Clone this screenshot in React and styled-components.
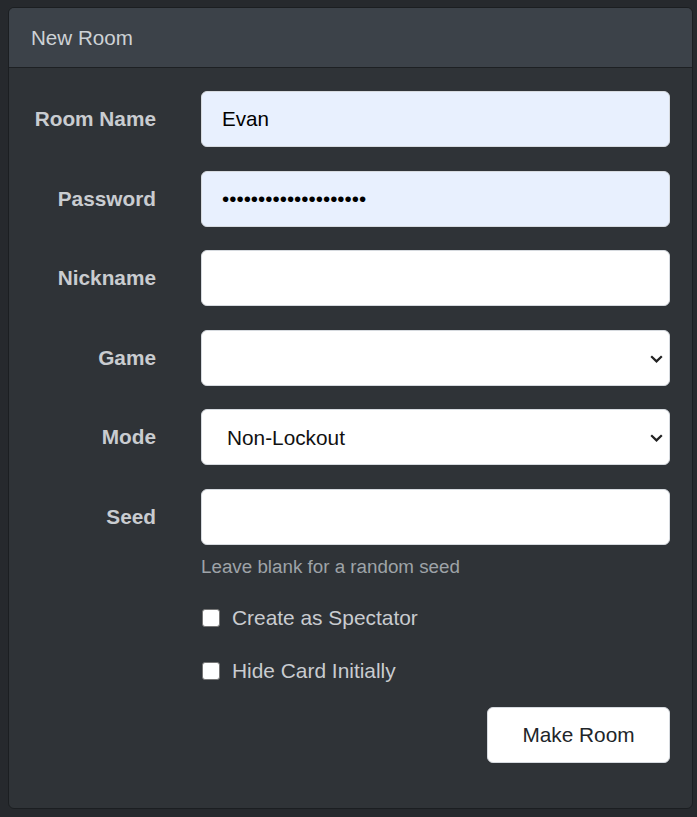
import React from "react";
import styled, { createGlobalStyle } from "styled-components";

const GlobalStyle = createGlobalStyle`
  body {
    margin: 0;
    background: #26292d;
    font-family: "Liberation Sans", Arial, sans-serif;
  }
`;

const Card = styled.div`
  margin: 7px 0 8px 8px;
  width: 685px;
  box-sizing: border-box;
  background: #2f3337;
  border: 1px solid #1b1e21;
  border-radius: 6px;
  overflow: hidden;
`;

const Header = styled.div`
  height: 59px;
  display: flex;
  align-items: center;
  padding: 0 22px;
  background: #3c4249;
  border-bottom: 1px solid #1d2023;
  color: #ced2d6;
  font-size: 20.6px;
`;

const Body = styled.div`
  padding: 23px 22px 45px 25px;
`;

const Fields = styled.div`
  display: flex;
  flex-direction: column;
  gap: 23.5px;
`;

const Row = styled.div`
  display: flex;
  align-items: flex-start;
`;

const Label = styled.label`
  width: 122px;
  margin-right: 45px;
  flex-shrink: 0;
  height: 56px;
  line-height: 56px;
  text-align: right;
  font-weight: bold;
  font-size: 20.8px;
  color: #c9ccd0;
  white-space: nowrap;
`;

const Control = styled.div`
  flex: 1;
  display: flex;
  flex-direction: column;
  position: relative;
`;

const Input = styled.input`
  height: 56px;
  box-sizing: border-box;
  width: 100%;
  padding: 0 20px;
  border: 1px solid #d6dadf;
  border-radius: 6px;
  background: ${(p) => (p.$filled ? "#e8f0fe" : "#ffffff")};
  color: #000;
  font-family: inherit;
  font-size: 20.6px;
  outline: none;
`;

const Select = styled.select`
  appearance: none;
  height: 56px;
  box-sizing: border-box;
  width: 100%;
  padding: 0 40px 0 25px;
  border: 1px solid #d6dadf;
  border-radius: 6px;
  background: #ffffff;
  color: #111;
  font-family: inherit;
  font-size: 20.8px;
  outline: none;
`;

const Chevron = styled.svg`
  position: absolute;
  right: 7px;
  top: 25px;
  pointer-events: none;
`;

const Help = styled.div`
  margin-top: 8px;
  font-size: 18.8px;
  line-height: 1.5;
  color: #9ea3a8;
`;

const Options = styled.div`
  padding-left: 167px;
  display: flex;
  flex-direction: column;
  gap: 21.3px;
  margin-top: 22px;
`;

const Check = styled.label`
  display: flex;
  align-items: center;
  gap: 12px;
  height: 31.2px;
  font-size: 20.9px;
  color: #c9ccd0;
`;

const Box = styled.span`
  width: 16px;
  height: 16px;
  margin-left: 1px;
  background: #ffffff;
  border: 1px solid #767676;
  border-radius: 3px;
`;

const Footer = styled.div`
  display: flex;
  justify-content: flex-end;
  margin-top: 21px;
`;

const Button = styled.button`
  height: 56px;
  width: 183px;
  padding: 0;
  background: #ffffff;
  border: 1px solid #d6dadf;
  border-radius: 6px;
  color: #212529;
  font-family: inherit;
  font-size: 20.8px;
`;

function SelectField({ label, value }) {
  return (
    <Row>
      <Label>{label}</Label>
      <Control>
        <Select defaultValue={value}>
          <option value="">{""}</option>
          <option value="Non-Lockout">Non-Lockout</option>
        </Select>
        <Chevron width="13" height="8" viewBox="0 0 13 8">
          <path d="M1.2 1.2 L6.5 6.4 L11.8 1.2" fill="none" stroke="#222" strokeWidth="2.2" />
        </Chevron>
      </Control>
    </Row>
  );
}

export default function App() {
  return (
    <>
      <GlobalStyle />
      <Card>
        <Header>New Room</Header>
        <Body>
          <Fields>
            <Row>
              <Label>Room Name</Label>
              <Control>
                <Input $filled defaultValue="Evan" />
              </Control>
            </Row>
            <Row>
              <Label>Password</Label>
              <Control>
                <Input $filled type="password" defaultValue="aaaaaaaaaaaaaaaaaaaa" />
              </Control>
            </Row>
            <Row>
              <Label>Nickname</Label>
              <Control>
                <Input />
              </Control>
            </Row>
            <SelectField label="Game" value="" />
            <SelectField label="Mode" value="Non-Lockout" />
            <Row>
              <Label>Seed</Label>
              <Control>
                <Input />
                <Help>Leave blank for a random seed</Help>
              </Control>
            </Row>
          </Fields>
          <Options>
            <Check>
              <Box />
              Create as Spectator
            </Check>
            <Check>
              <Box />
              Hide Card Initially
            </Check>
          </Options>
          <Footer>
            <Button>Make Room</Button>
          </Footer>
        </Body>
      </Card>
    </>
  );
}
